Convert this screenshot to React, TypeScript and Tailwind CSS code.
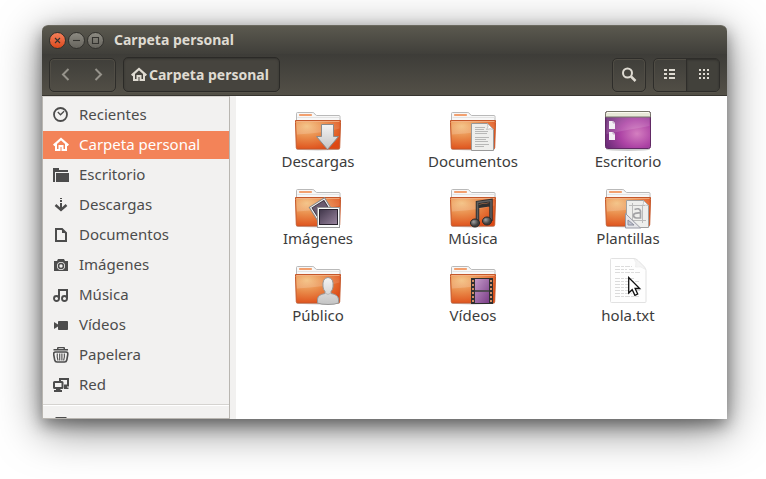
import type { ReactNode } from 'react';

const font = "font-['Noto_Sans','Open_Sans',sans-serif]";

function Glyph({ children, className = '' }: { children: ReactNode; className?: string }) {
  return (
    <svg viewBox="0 0 16 16" className={`size-4 shrink-0 ${className}`} fill="currentColor" aria-hidden="true">
      {children}
    </svg>
  );
}

const homeGlyph = (
  <>
    <path d="M.7 8.3 8 2l7.300 6.300" fill="none" stroke="currentColor" strokeWidth="2.200" />
    <path d="M3 7v6h3.500V9h3v4H13V7" fill="none" stroke="currentColor" strokeWidth="2" />
  </>
);

const places: { name: string; glyph: ReactNode }[] = [
  {
    name: 'Recientes',
    glyph: (
      <>
        <circle cx="7.5" cy="7.5" r="6.5" fill="none" stroke="currentColor" strokeWidth="1.8" />
        <path d="m4.800 5 2.700 2.800 3.600-3.600" fill="none" stroke="currentColor" strokeWidth="1.300" />
      </>
    ),
  },
  { name: 'Carpeta personal', glyph: homeGlyph },
  {
    name: 'Escritorio',
    glyph: (
      <>
        <path d="M0 1h6v2h9v2H2v10H0z" />
        <path d="M3 6h13v9H3z" />
      </>
    ),
  },
  {
    name: 'Descargas',
    glyph: (
      <>
        <path d="M7 1h2v1H7zM7 3h2v2H7zM7 6h2v6H7z" />
        <path d="m2.500 8 5.500 5 5.500-5" fill="none" stroke="currentColor" strokeWidth="2.400" />
      </>
    ),
  },
  {
    name: 'Documentos',
    glyph: (
      <>
        <path d="M3 2h6l4 4v8H3z" fill="none" stroke="currentColor" strokeWidth="2" />
        <path d="M9 2v4h4z" />
      </>
    ),
  },
  {
    name: 'Imágenes',
    glyph: (
      <path
        fillRule="evenodd"
        d="M1 4h3l1-2h6l1 2h3v10H1z M8 5a4 4 0 1 0 0 8 4 4 0 0 0 0-8z M8 5.800a3.200 3.200 0 1 1 0 6.400 3.200 3.200 0 0 1 0-6.400z M8 7.300a1.700 1.700 0 1 0 0 3.400 1.700 1.700 0 0 0 0-3.400z"
      />
    ),
  },
  {
    name: 'Música',
    glyph: (
      <>
        <path d="M6 11.500V3h8v8.500" fill="none" stroke="currentColor" strokeWidth="2" />
        <circle cx="3.500" cy="11.500" r="2.500" fill="none" stroke="currentColor" strokeWidth="1.900" />
        <circle cx="11.500" cy="11.500" r="2.500" fill="none" stroke="currentColor" strokeWidth="1.900" />
      </>
    ),
  },
  {
    name: 'Vídeos',
    glyph: (
      <>
        <path d="M1 5v7l4-2.500v-2z" />
        <rect x="5" y="4" width="10" height="9" rx="0.8" />
      </>
    ),
  },
  {
    name: 'Papelera',
    glyph: (
      <>
        <path d="M4 3V1.200q0-1.200 1-1.200h6q1 0 1 1.200V3z M5.500 1.300h5V2h-5z" fillRule="evenodd" />
        <path d="M.5 2h14.500v1.500H.5z" />
        <path d="M2.500 5Q.2 5 .8 8l.9 5q.4 2 2.300 2h7.500q1.900 0 2.300-2l.9-5q.6-3-1.700-3z" fill="none" stroke="currentColor" strokeWidth="1.600" />
        <path d="M4.300 6.500q-.5 3.500.7 7M6.700 6.500v7M8.900 6.500v7M11.300 6.500q.5 3.500-.7 7" fill="none" stroke="currentColor" strokeWidth="1.100" />
      </>
    ),
  },
  {
    name: 'Red',
    glyph: (
      <>
        <path d="M7 4V2h8v6.500h-4" fill="none" stroke="currentColor" strokeWidth="2" />
        <path d="M11 9h3v1.500h1.500V12H11z" />
        <rect x="1" y="5" width="8.500" height="6" rx="0.500" fill="none" stroke="currentColor" strokeWidth="2" />
        <path d="M3 12h4.500v1H9v2H1v-2h2z" />
      </>
    ),
  },
];

function Folder({ children }: { children: ReactNode }) {
  return (
    <>
      <ellipse cx="24" cy="45.400" rx="22" ry="1" fill="#000" opacity="0.2" />
      <path d="M2.500 18V9.500q0-1 1-1h15.300q.8 0 1.300.6l1.600 1.900q.5.500 1.200.500h22.100q1 0 1 1V18z" fill="#f7f7f7" stroke="#b9b9b9" />
      <path d="M3.500 13.500h42" stroke="#e4e4e4" />
      <rect x="5" y="10" width="13" height="2" rx="0.8" fill="#f2a06f" />
      <path d="M1.500 16.500h45v2l-.8 25.200q-.1 1.300-1.400 1.300H3.700q-1.300 0-1.400-1.300L1.500 18.500z" fill="url(#folder)" stroke="#c4572a" />
      <path d="M2.500 17.500h43v7Q30 29 3 30.500z" fill="url(#sheen)" />
      <path d="M2.500 17.500h43" stroke="#f3b58b" opacity="0.8" />
      {children}
    </>
  );
}

const files: { name: string; art: ReactNode; pointer?: boolean }[] = [
  {
    name: 'Descargas',
    art: (
      <Folder>
        <path d="M27.500 20.500h12v12h5L33.500 45.500 22.500 32.500h5z" fill="url(#metal)" stroke="#8b8b8b" />
      </Folder>
    ),
  },
  {
    name: 'Documentos',
    art: (
      <Folder>
        <path d="M22.500 19.500h16l6 6v21h-22z" fill="#eeeeec" stroke="#999" />
        <path d="M38.500 19.500q1.500 4-1 6 4-1.500 7 0z" fill="#fff" stroke="#aaa" strokeWidth="0.7" />
        <path d="M26 23.500h10M26 25.500h9M26 27.500h13M26 29.500h12M26 33.500h14M26 35.500h11M26 37.500h13M26 40.500h14M26 42.500h9" stroke="#aaa" strokeWidth="0.8" />
      </Folder>
    ),
  },
  {
    name: 'Escritorio',
    art: (
      <>
        <ellipse cx="24" cy="45.500" rx="22" ry="1.500" fill="#000" opacity="0.2" />
        <rect x="1.500" y="7.500" width="45" height="37" rx="2" fill="url(#desk)" stroke="#612a65" />
        <path d="M2.500 13h43v9Q28 25 2.500 30z" fill="#fff" opacity="0.13" />
        <path d="M1.500 13V9.500q0-2 2-2h41q2 0 2 2V13z" fill="#e8e9d8" stroke="#77776a" />
        <path d="M3 8.500h42" stroke="#fafaf0" />
        <path d="M5 17h4l2 2v6H5zM5 28h4l2 2v6H5z" fill="#f3eff4" />
        <path d="M9 17v2h2M9 28v2h2" fill="none" stroke="#b69abb" strokeWidth="0.8" />
      </>
    ),
  },
  {
    name: 'Imágenes',
    art: (
      <Folder>
        <g transform="rotate(-32 27 29)">
          <rect x="18.500" y="20.500" width="18" height="18" fill="#fafafa" stroke="#888" />
          <rect x="20.500" y="22.500" width="14" height="12" fill="#6b5b70" stroke="#443b48" />
        </g>
        <rect x="23.500" y="26.500" width="22" height="20" fill="#fafafa" stroke="#999" />
        <rect x="25.500" y="28.500" width="18" height="15" fill="url(#photo)" stroke="#29222e" />
      </Folder>
    ),
  },
  {
    name: 'Música',
    art: (
      <Folder>
        <path d="M28.500 42V21.500l13.500-2V40M28.500 25.500l13.500-2" fill="none" stroke="#303030" strokeWidth="3.500" />
        <path d="M28.500 42V21.500l13.500-2V40" fill="none" stroke="#606060" strokeWidth="1.500" />
        <ellipse cx="26" cy="42" rx="4.500" ry="4" fill="url(#note)" stroke="#292929" />
        <ellipse cx="38" cy="40" rx="4.500" ry="4" fill="url(#note)" stroke="#292929" />
      </Folder>
    ),
  },
  {
    name: 'Plantillas',
    art: (
      <Folder>
        <path d="M22.500 19.500h17l5 5v22h-22z" fill="#eeeeec" stroke="#a0a0a0" />
        <path d="M39.500 19.500q1 3-1 5 3-1 6 0z" fill="#fff" stroke="#aaa" strokeWidth="0.7" />
        <path d="M25 24.500h16M25 39.500h17M28.500 22v20M38.500 24v18" stroke="#bbb" />
        <path d="M30.500 28.500q5-2 6 1.500v7h-4q-3-.2-3-2.700 0-2.800 7-2.300" fill="none" stroke="#a2a2a5" strokeWidth="1.700" />
        <path d="M21.500 32.500v14.500h15z" fill="#e4e4e8" stroke="#999aa5" />
        <path d="M24 39v5h6z" fill="#c2c4d2" stroke="#8c8f9e" />
      </Folder>
    ),
  },
  {
    name: 'Público',
    art: (
      <Folder>
        <path
          d="M29 29q-1-9 5-9.500 6 .5 5 9.500-.5 3-2 4.500v2q7 1 7.500 5.500v4Q41 46.500 34 46.500t-10.500-1.500v-4q.5-4.500 7.500-5.500v-2Q29.500 32 29 29z"
          fill="url(#metal)"
          stroke="#989898"
        />
        <path d="M31 35q3 3 6 0" fill="none" stroke="#bbb" />
      </Folder>
    ),
  },
  {
    name: 'Vídeos',
    art: (
      <Folder>
        <rect x="22" y="20" width="22" height="26" fill="#303030" />
        <path d="M26 21h14v11H26zM26 34h14v11H26z" fill="url(#film)" />
        <path d="M24 22v24M42 22v24" stroke="#eda071" strokeWidth="1.700" strokeDasharray="2 2" />
        <path d="M26 33h14" stroke="#77677c" />
      </Folder>
    ),
  },
  {
    name: 'hola.txt',
    pointer: true,
    art: (
      <>
        <path d="M6.500 1.500q0-1 1-1h22.500q2 0 4 2l6 6q2 2 2 4v31q0 1-1 1h-33.500q-1 0-1-1z" fill="#fefefe" stroke="#e2e2e2" />
        <path d="M30 1q3 3 1.500 8 5-1.500 10 2.500-1-2-3-4l-4-4q-2-2-4.500-2.500z" fill="#f4f4f4" stroke="#e8e8e8" strokeWidth="0.6" />
        <path d="M11 8.500h17M11 11.500h12M25 11.500h5M11 14.500h25M11 20.500h20M11 23.500h24M11 26.500h18M11 29.500h22M11 32.500h25M11 35.500h17M11 38.500h24" stroke="#dcdcdc" strokeDasharray="5 1 3 1" />
      </>
    ),
  },
];

function Gradients() {
  return (
    <svg className="absolute size-0" aria-hidden="true">
      <defs>
        <radialGradient id="folder" cx="0.25" cy="0.2" r="0.9">
          <stop offset="0" stopColor="#f3bf7e" />
          <stop offset="0.45" stopColor="#e98a49" />
          <stop offset="1" stopColor="#dd4814" />
        </radialGradient>
        <linearGradient id="sheen" x2="0" y2="1">
          <stop offset="0" stopColor="#fff" stopOpacity="0.05" />
          <stop offset="1" stopColor="#fff" stopOpacity="0.18" />
        </linearGradient>
        <linearGradient id="metal" x2="0" y2="1">
          <stop offset="0" stopColor="#f4f4f4" />
          <stop offset="1" stopColor="#c4c4c4" />
        </linearGradient>
        <radialGradient id="desk" cx="0.7" cy="0.6" r="0.75">
          <stop offset="0" stopColor="#d47fc0" />
          <stop offset="0.5" stopColor="#ad43a5" />
          <stop offset="1" stopColor="#6b2c78" />
        </radialGradient>
        <linearGradient id="photo" x2="1" y2="1">
          <stop offset="0" stopColor="#3f3549" />
          <stop offset="1" stopColor="#9b86a0" />
        </linearGradient>
        <radialGradient id="note" cx="0.35" cy="0.35">
          <stop offset="0" stopColor="#a0a0a0" />
          <stop offset="1" stopColor="#404040" />
        </radialGradient>
        <linearGradient id="film" x2="1" y2="1">
          <stop offset="0" stopColor="#c39ac8" />
          <stop offset="1" stopColor="#7b3d88" />
        </linearGradient>
      </defs>
    </svg>
  );
}

const group = 'flex rounded-[5px] border border-[#2e2d2a] shadow-[inset_0_0_0_1px_#504d45,0_1px_0_#57544b]';

function WindowButton({ label, close, children }: { label: string; close?: boolean; children: ReactNode }) {
  return (
    <button
      type="button"
      aria-label={label}
      className={`size-[17px] rounded-full border border-[#32312d] text-[#34332f] ${
        close ? 'bg-linear-to-b from-[#f47e58] to-[#dc491a]' : 'bg-linear-to-b from-[#8d8b82] to-[#66645d]'
      }`}
    >
      <svg viewBox="0 0 15 15" className="size-full" fill="none" stroke="currentColor" strokeWidth="1.1" aria-hidden="true">
        {children}
      </svg>
    </button>
  );
}

export default function App() {
  return (
    <div className={`${font} flex h-screen flex-col bg-white pt-[25px] pr-[39px] pb-[60px] pl-[42px] text-[#3c3c3c]`}>
      <Gradients />
      <main className="flex min-h-0 flex-1 flex-col rounded-t-md shadow-[0_6px_16px_rgba(0,0,0,0.4),0_10px_44px_rgba(0,0,0,0.5)]">
        <header className="flex h-[29px] shrink-0 items-center gap-0.5 rounded-t-md border-t border-[#6b695f] bg-linear-to-b from-[#5b594f] to-[#403f3a] pl-[7px]">
          <WindowButton label="Cerrar" close>
            <path d="m5 5 5 5m0-5-5 5" />
          </WindowButton>
          <WindowButton label="Minimizar">
            <path d="M4 7.500h7" />
          </WindowButton>
          <WindowButton label="Maximizar">
            <path d="M4.500 4.500h6v6h-6z" />
          </WindowButton>
          <h1 className="pl-2 text-sm font-bold text-[#dfdbd2]">Carpeta personal</h1>
        </header>

        <div className="flex h-[42px] shrink-0 items-center border-b border-[#36342f] bg-linear-to-b from-[#3d3c38] to-[#535047] px-[7px] text-[#dfdbd2]">
          <div className={`${group} h-[34px] w-[67px] text-[#96938b]`}>
            <button type="button" aria-label="Atrás" className="flex flex-1 items-center justify-center">
              <Glyph><path d="M10.500 2 5 7.500l5.500 5.500" fill="none" stroke="currentColor" strokeWidth="2" /></Glyph>
            </button>
            <button type="button" aria-label="Adelante" className="flex flex-1 items-center justify-center">
              <Glyph><path d="M4.500 2 10 7.500 4.500 13" fill="none" stroke="currentColor" strokeWidth="2" /></Glyph>
            </button>
          </div>
          <button type="button" className="ml-[7px] flex h-[35px] items-center gap-0.5 rounded-[5px] border border-[#2b2a27] bg-[#46443e] pr-2.5 pl-[7px] text-sm font-bold shadow-[inset_0_1px_2px_#343330,0_1px_0_#57544b]">
            <Glyph>{homeGlyph}</Glyph>
            Carpeta personal
          </button>
          <div className={`${group} ml-auto h-[34px] w-[34px]`}>
            <button type="button" aria-label="Buscar" className="flex flex-1 items-center justify-center">
              <Glyph>
                <circle cx="6.500" cy="6" r="4.500" fill="none" stroke="currentColor" strokeWidth="2" />
                <path d="m10 9.500 4.500 4.500" stroke="currentColor" strokeWidth="2.500" />
              </Glyph>
            </button>
          </div>
          <div className={`${group} ml-[7px] h-[34px] w-[67px]`}>
            <button type="button" aria-label="Vista de lista" className="flex w-[33px] items-center justify-center border-r border-[#2e2d2a]">
              <Glyph><path d="M2 2h3v2H2zM7 2h6v2H7zM2 6h3v2H2zM7 6h6v2H7zM2 10h3v2H2zM7 10h6v2H7z" /></Glyph>
            </button>
            <button type="button" aria-label="Vista de iconos" className="flex w-8 items-center justify-center rounded-r bg-[#42413b] shadow-[inset_0_1px_2px_#2f2e2b]">
              <Glyph><path d="M4 2h2v2H4zM8 2h2v2H8zM12 2h2v2h-2zM4 6h2v2H4zM8 6h2v2H8zM12 6h2v2h-2zM4 10h2v2H4zM8 10h2v2H8zM12 10h2v2h-2z" /></Glyph>
            </button>
          </div>
        </div>

        <div className="flex min-h-0 flex-1 bg-white">
          <nav className="w-[188px] shrink-0 overflow-hidden border border-[#b9b6b1] border-t-[#d5d2ce] bg-[#f2f1f0] pt-1 text-[#4c4c4c]">
            <ul className="flex flex-col gap-0.5">
              {places.map(({ name, glyph }) => (
                <li key={name}>
                  <button
                    type="button"
                    className={`flex h-7 w-full items-center gap-2.5 px-2.5 text-left text-[15px] ${
                      name === 'Carpeta personal' ? 'bg-[#f38358] text-white' : ''
                    }`}
                  >
                    <Glyph>{glyph}</Glyph>
                    <span className="pb-0.5">{name}</span>
                  </button>
                </li>
              ))}
            </ul>
            <hr className="mt-[5px] mb-[3px] h-0.5 border-t border-[#d5d3d0] bg-white" />
            <button type="button" aria-label="Equipo" className="flex h-7 w-full items-center px-2.5">
              <Glyph><path d="M3 2h10l2 2v9H1V4z" /></Glyph>
            </button>
          </nav>
          <div className="w-1.5 shrink-0 bg-[#f2f1f0]" />
          <ul className="grid min-w-0 flex-1 grid-cols-[repeat(auto-fill,154px)] content-start gap-x-px gap-y-[11px] overflow-hidden pt-2 pl-[5px]">
            {files.map(({ name, art, pointer }) => (
              <li key={name}>
                <button type="button" className="relative flex w-full flex-col items-center text-[15px] leading-[18px]">
                  <svg viewBox="0 0 48 48" className="size-12" fill="none" aria-hidden="true">
                    {art}
                  </svg>
                  {name}
                  {pointer && (
                    <svg viewBox="0 0 14 22" className="absolute top-[18px] left-1/2 h-[22px] w-[14px]" aria-hidden="true">
                      <path d="M.7 1.500v15.500l3.500-3.300 2.700 5.600 2.800-1.300-2.600-5.500h4.600z" fill="#fff" stroke="#111" strokeWidth="1.300" />
                    </svg>
                  )}
                </button>
              </li>
            ))}
          </ul>
        </div>
      </main>
    </div>
  );
}
